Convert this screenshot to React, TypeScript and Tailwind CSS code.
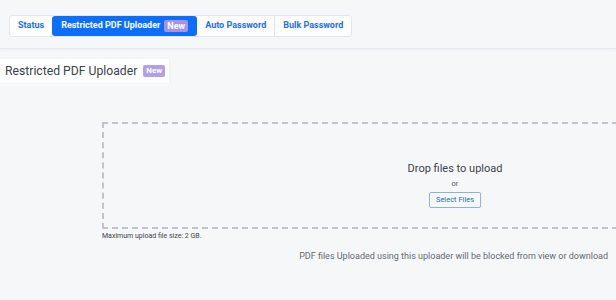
export default function App() {
  const font = { fontFamily: 'Roboto, "Noto Sans", sans-serif' };
  return (
    <div className="w-[616px] h-[300px] overflow-hidden bg-[#f6f7f9]" style={font}>
      <div className="pt-[15px] pb-[11px] pl-[9px] border-b border-[#e6e8eb] shadow-[0_1px_2px_rgba(0,0,0,0.04)]">
        <div className="flex h-[22px] w-max rounded-[3px] border border-[#e3e6ea] bg-white text-[9px] font-bold text-[#1b6ef3]">
          <div className="flex items-center px-[8px]">Status</div>
          <div className="flex items-center gap-[4px] rounded-[3px] bg-[#0b6efd] px-[9px] text-white">
            Restricted PDF Uploader
            <span className="rounded-[2px] bg-[#a594e0] px-[3px] leading-[12px] text-white">New</span>
          </div>
          <div className="flex items-center px-[8px] border-r border-[#e3e6ea]">Auto Password</div>
          <div className="flex items-center px-[8px]">Bulk Password</div>
        </div>
      </div>

      <div className="mt-[10px] flex h-[24px] w-max items-center gap-[6px] bg-white pl-[5px] pr-[4px] shadow-[0_0_2px_rgba(0,0,0,0.06)]">
        <span className="text-[12.2px] text-[#3c434a]">Restricted PDF Uploader</span>
        <span className="rounded-[2px] bg-[#b3a1e6] px-[3px] text-[8px] font-bold leading-[12px] text-white">New</span>
      </div>

      <div className="ml-[102px] mt-[39px]">
        <div className="flex h-[107px] w-[706px] flex-col items-center justify-center border-2 border-dashed border-[#c3c4c7]">
          <div className="mt-[18px] text-[11px] leading-[16px] text-[#3c434a]">Drop files to upload</div>
          <div className="mt-[2px] text-[7.5px] leading-[10px] text-[#50575e]">or</div>
          <button className="mt-[3px] h-[16px] rounded-[2px] border border-[#8bb4da] bg-[#f6f7f7] px-[6px] text-[7.5px] leading-[14px] text-[#2271b1]">
            Select Files
          </button>
        </div>
        <div className="mt-[2px] text-[7px] leading-[10px] text-[#3c434a]">Maximum upload file size: 2 GB.</div>
      </div>

      <div className="mt-[9px] pr-[8px] text-right text-[9px] text-[#646970]">
        PDF files Uploaded using this uploader will be blocked from view or download
      </div>
    </div>
  );
}
